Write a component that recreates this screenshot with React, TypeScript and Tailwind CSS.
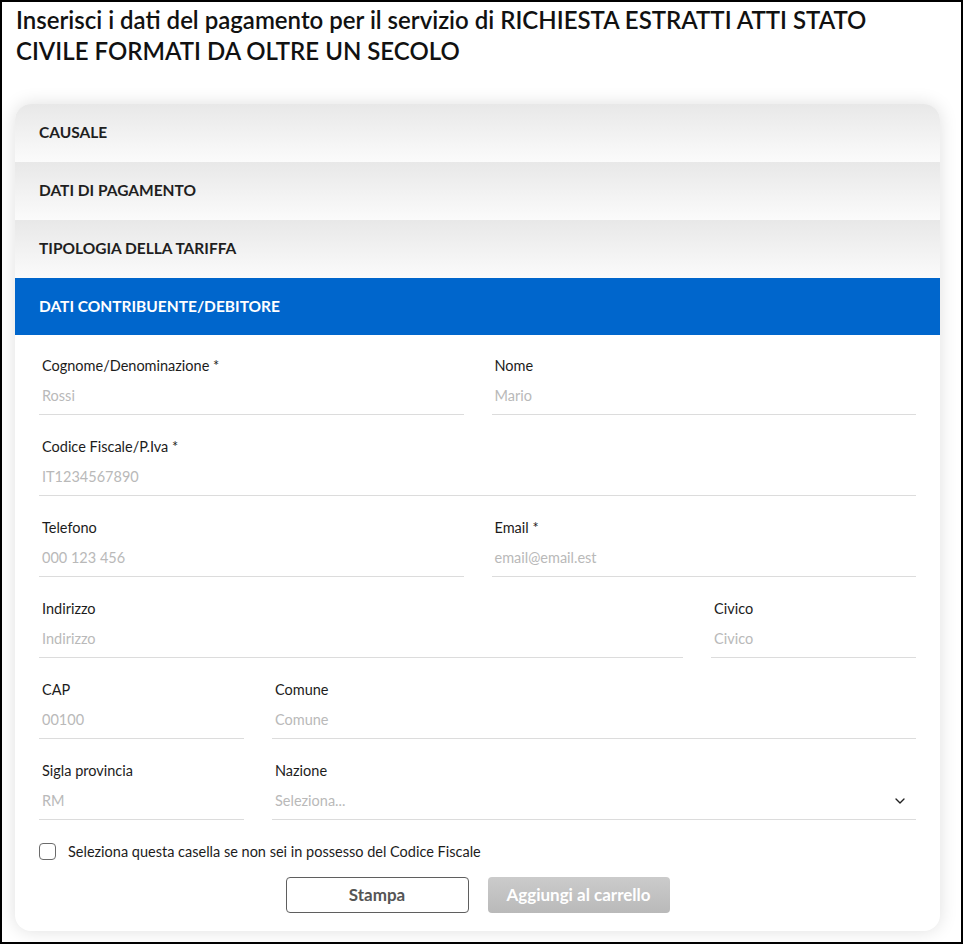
import { ChevronDown } from "lucide-react";

const font = { fontFamily: "Lato, 'Noto Sans', sans-serif" };

interface FieldProps {
  label: string;
  placeholder: string;
  select?: boolean;
}

const Field = ({ label, placeholder, select }: FieldProps) => {
  return (
    <div className="flex flex-col">
      <label className="h-5 px-[3px] text-[14.5px] leading-5 text-[#1c1c1c]">{label}</label>
      <div className="flex h-[39px] items-center justify-between border-b border-[#dcdcdc] px-[3px] pt-[1px]">
        <span className="text-[14.5px] text-[#b9b9b9]">{placeholder}</span>
        {select && <ChevronDown size={16} strokeWidth={2} className="mr-[5px] text-[#222]" />}
      </div>
    </div>
  );
};

const Section = ({ title, active }: { title: string; active?: boolean }) => (
  <div
    className={
      active
        ? "flex h-[57px] items-center bg-[#0066cc] px-6 text-[15.5px] font-bold uppercase text-white"
        : "flex h-[58px] items-center bg-gradient-to-b from-[#e8e8e8] to-[#fbfbfb] px-6 text-[15.5px] font-bold uppercase text-[#1f1f1f]"
    }
  >
    {title}
  </div>
);

export default function App() {
  return (
    <div className="box-border h-[944px] w-full border-2 border-black bg-white" style={font}>
      <h1 className="pl-[14px] pr-[60px] pt-[2px] text-[24px] font-semibold leading-[31px] text-[#111]">
        Inserisci i dati del pagamento per il servizio di RICHIESTA ESTRATTI ATTI STATO CIVILE FORMATI DA OLTRE UN
        SECOLO
      </h1>

      <div className="ml-[13px] mr-[21px] mt-[38px] overflow-hidden rounded-2xl bg-white shadow-[0_0_18px_rgba(0,0,0,0.13)]">
        <Section title="Causale" />
        <Section title="Dati di pagamento" />
        <Section title="Tipologia della tariffa" />
        <Section title="Dati contribuente/debitore" active />

        <div className="flex flex-col gap-[22px] px-6 pt-[21px]">
          <div className="grid grid-cols-2 gap-x-7">
            <Field label="Cognome/Denominazione *" placeholder="Rossi" />
            <Field label="Nome" placeholder="Mario" />
          </div>
          <Field label="Codice Fiscale/P.Iva *" placeholder="IT1234567890" />
          <div className="grid grid-cols-2 gap-x-7">
            <Field label="Telefono" placeholder="000 123 456" />
            <Field label="Email *" placeholder="email@email.est" />
          </div>
          <div className="grid grid-cols-[1fr_205px] gap-x-7">
            <Field label="Indirizzo" placeholder="Indirizzo" />
            <Field label="Civico" placeholder="Civico" />
          </div>
          <div className="grid grid-cols-[205px_1fr] gap-x-7">
            <Field label="CAP" placeholder="00100" />
            <Field label="Comune" placeholder="Comune" />
          </div>
          <div className="grid grid-cols-[205px_1fr] gap-x-7">
            <Field label="Sigla provincia" placeholder="RM" />
            <Field label="Nazione" placeholder="Seleziona..." select />
          </div>
        </div>

        <label className="mt-[21px] flex items-center gap-3 px-6 text-[14.5px] text-[#1c1c1c]">
          <span className="h-[17px] w-[17px] rounded-[4px] border border-[#6b6b6b] bg-white" />
          Seleziona questa casella se non sei in possesso del Codice Fiscale
        </label>

        <div className="flex justify-center gap-[19px] pb-[18px] pt-[14px]">
          <button className="h-9 w-[183px] rounded-[4px] border border-[#5f5f5f] bg-white text-[17px] font-bold text-[#555]">
            Stampa
          </button>
          <button className="h-9 w-[182px] rounded-[4px] bg-gradient-to-b from-[#cbcbcb] to-[#b9b9b9] text-[17px] font-bold text-white">
            Aggiungi al carrello
          </button>
        </div>
      </div>
    </div>
  );
}
